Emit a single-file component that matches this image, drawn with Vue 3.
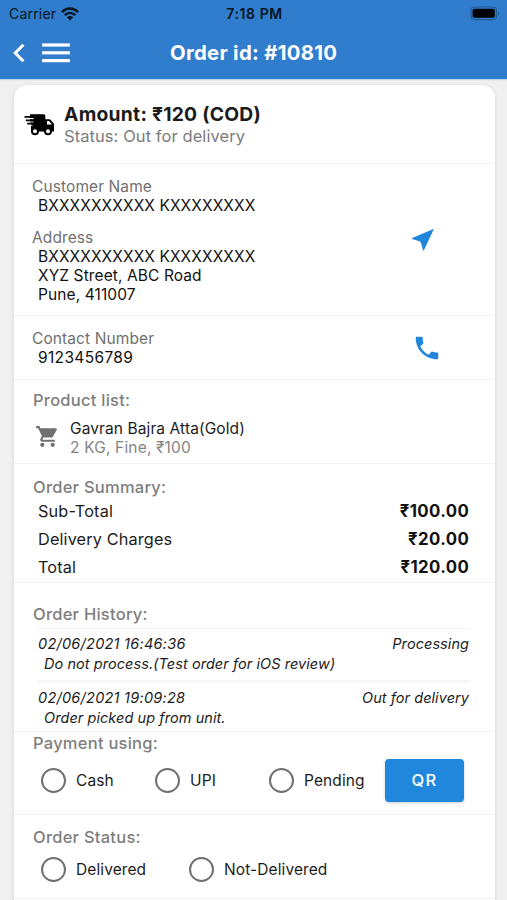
<script setup>
const summary = [
  { label: 'Sub-Total', value: '₹100.00' },
  { label: 'Delivery Charges', value: '₹20.00' },
  { label: 'Total', value: '₹120.00' },
]
const history = [
  { date: '02/06/2021 16:46:36', state: 'Processing', note: 'Do not process.(Test order for iOS review)' },
  { date: '02/06/2021 19:09:28', state: 'Out for delivery', note: 'Order picked up from unit.' },
]
</script>

<template>
  <div class="screen">
    <header class="header">
      <div class="statusbar">
        <div class="carrier">
          <span>Carrier</span>
          <svg width="18" height="14" viewBox="0 0 18 14" fill="none" stroke="#081422" stroke-width="2.5">
            <path d="M0.9 5.1C5.6 .4 12.4 .4 17.1 5.1" />
            <path d="M3.7 8.2C6.8 5.2 11.2 5.2 14.3 8.2" />
            <path d="M9 13.4L5.9 10.2C7.7 8.6 10.3 8.6 12.1 10.2Z" fill="#081422" stroke="none" />
          </svg>
        </div>
        <span class="time">7:18 PM</span>
        <svg class="battery" width="30" height="15" viewBox="0 0 30 15">
          <rect x="1" y="1" width="25.5" height="12.6" rx="3.5" fill="none" stroke="#225b96" stroke-width="1.2" />
          <rect x="2.6" y="2.8" width="22.2" height="9" rx="1.8" fill="#000" />
          <path d="M28 5.2Q30 7.3 28 9.4Z" fill="#225b96" />
        </svg>
      </div>
      <div class="navbar">
        <svg class="back" width="14" height="20" viewBox="0 0 14 20" fill="none" stroke="#fff" stroke-width="3">
          <path d="M12.4 1.8L4.2 10L12.4 18.2" />
        </svg>
        <svg class="menu" width="28" height="20" viewBox="0 0 28 20" fill="#fff">
          <rect y="0.4" width="28" height="3.2" /><rect y="8.2" width="28" height="3.2" /><rect y="16" width="28" height="3.2" />
        </svg>
        <h1>Order id: #10810</h1>
      </div>
    </header>

    <main class="card">
      <section class="amount">
        <svg class="truck" width="32" height="24" viewBox="0 0 32 24">
          <path d="M6 2.2H19.8Q21.3 2.2 21.3 3.7V7.2H25.2Q26.1 7.2 26.8 7.9L29.4 11Q30 11.7 30 12.5V19.6H7V11L6 10Z" fill="#000" />
          <path d="M1.5 6.6H9.5M2 10H9.5M3 13.3H8.5" stroke="#fff" stroke-width="1.1" />
          <path d="M0.5 4.9H8M1.8 8.3H9M3.2 11.7H9" stroke="#000" stroke-width="1.7" />
          <path d="M23 8.9H25L28 12.4H23Z" fill="#fff" />
          <circle cx="11" cy="19.3" r="3" fill="#fff" stroke="#000" stroke-width="2" />
          <circle cx="24" cy="19.3" r="3" fill="#fff" stroke="#000" stroke-width="2" />
        </svg>
        <div>
          <h2>Amount: ₹120 (COD)</h2>
          <p class="state">Status: Out for delivery</p>
        </div>
      </section>

      <section class="customer">
        <div>
          <p class="label">Customer Name</p>
          <p class="value">BXXXXXXXXXX KXXXXXXXX</p>
          <p class="label address-label">Address</p>
          <p class="value">BXXXXXXXXXX KXXXXXXXX</p>
          <p class="value">XYZ Street, ABC Road</p>
          <p class="value">Pune, 411007</p>
        </div>
        <svg class="nav-icon" width="24" height="24" viewBox="0 0 24 24"><path d="M23 .8L12.8 22.6Q12.1 22.8 12 22L9.9 14.8Q9.5 13.7 8.4 13.3L1.2 11.1Q.7 10.5 1.2 10Z" fill="#2185dc" /></svg>
      </section>

      <section class="contact">
        <div>
          <p class="label">Contact Number</p>
          <p class="value digits">9123456789</p>
        </div>
        <svg class="phone" width="30" height="30" viewBox="0 0 24 24"><path fill="#2185dc" d="M6.62 10.79c1.44 2.83 3.76 5.14 6.59 6.59l2.2-2.2c.27-.27.67-.36 1.02-.24 1.12.37 2.33.57 3.57.57.55 0 1 .45 1 1V20c0 .55-.45 1-1 1-9.39 0-17-7.61-17-17 0-.55.45-1 1-1h3.5c.55 0 1 .45 1 1 0 1.25.2 2.45.57 3.57.11.35.03.74-.25 1.02l-2.2 2.2z" /></svg>
      </section>

      <section class="products">
        <h3>Product list:</h3>
        <div class="product">
          <svg width="25" height="25" viewBox="0 0 24 24"><path fill="#707070" d="M7 18c-1.1 0-1.99.9-1.99 2S5.9 22 7 22s2-.9 2-2-.9-2-2-2zM1 2v2h2l3.6 7.59-1.35 2.45c-.16.28-.25.61-.25.96 0 1.1.9 2 2 2h12v-2H7.42c-.14 0-.25-.11-.25-.25l.03-.12.9-1.63h7.45c.75 0 1.41-.41 1.75-1.03l3.58-6.49c.08-.14.12-.31.12-.48 0-.55-.45-1-1-1H5.21l-.94-2H1zm16 16c-1.1 0-1.99.9-1.99 2s.89 2 1.99 2 2-.9 2-2-.9-2-2-2z" /></svg>
          <div>
            <p class="product-name">Gavran Bajra Atta(Gold)</p>
            <p class="product-info">2 KG, Fine, ₹100</p>
          </div>
        </div>
      </section>

      <section class="summary">
        <h3>Order Summary:</h3>
        <div v-for="row in summary" :key="row.label" class="sum-row">
          <span>{{ row.label }}</span><b>{{ row.value }}</b>
        </div>
      </section>

      <section class="history">
        <h3>Order History:</h3>
        <div v-for="h in history" :key="h.date" class="entry">
          <div class="entry-head"><span class="date">{{ h.date }}</span><span>{{ h.state }}</span></div>
          <p>{{ h.note }}</p>
        </div>
      </section>

      <section class="payment">
        <h3>Payment using:</h3>
        <div class="options">
          <label class="cash"><i></i>Cash</label>
          <label class="upi"><i></i>UPI</label>
          <label class="pending"><i></i>Pending</label>
          <button>QR</button>
        </div>
      </section>

      <section class="order-status">
        <h3>Order Status:</h3>
        <div class="options">
          <label class="delivered"><i></i>Delivered</label>
          <label><i></i>Not-Delivered</label>
        </div>
      </section>
    </main>
  </div>
</template>

<style>
body { margin: 0; }
</style>

<style scoped>
* { box-sizing: border-box; }
.screen {
  width: 507px; height: 900px; overflow: hidden; background: #f0f0f0;
  font-family: Inter, "Liberation Sans", sans-serif; font-size: 15.5px; line-height: 19px; color: #1c1c1c;
  letter-spacing: 0.1px;
}
h1, h2, h3, p { margin: 0; white-space: nowrap; }
.header { height: 79px; background: #307dcd; box-shadow: 0 1px 1px #b9d6f2; }
.statusbar {
  display: grid; grid-template-columns: 1fr auto 1fr; align-items: center;
  height: 27px; padding: 0 7px 0 9px; color: #081422; font-size: 14px;
}
.carrier { display: flex; align-items: center; gap: 5px; letter-spacing: 0.2px; }
.time { font-weight: 600; font-size: 14px; letter-spacing: 0.6px; }
.battery { justify-self: end; }
.navbar { display: flex; align-items: center; height: 51px; padding-left: 11px; color: #fff; }
.menu { margin-left: 17px; }
h1 { margin-left: 100px; font-size: 20.3px; font-weight: 700; letter-spacing: 0.3px; }
.card {
  width: 481px; height: 840px; margin: 6px 0 0 14px; background: #fff;
  border-radius: 13px; box-shadow: 0 1px 4px rgba(0, 0, 0, .12);
}
section { border-bottom: 1px solid #f2f2f2; }
.amount { display: flex; height: 79px; padding: 18px 0 0 10px; }
.truck { margin: 9px 8px 0 0; }
h2 { font-size: 19.3px; line-height: 23px; font-weight: 700; letter-spacing: 0.25px; }
.state { font-size: 16.5px; line-height: 21px; color: #7c7c7c; letter-spacing: 0.07px; }
.customer { height: 152px; padding: 13px 0 0 18px; display: flex; }
.customer > div, .contact > div { width: 379px; }
.label { color: #707070; }
.value { padding-left: 6px; color: #111; }
.digits { letter-spacing: 0.35px; }
.address-label { margin-top: 13px; }
.nav-icon { margin-top: 51px; }
.contact { height: 64px; padding: 13px 0 0 18px; display: flex; }
.phone { margin: 4px 0 0 1px; }
h3 { font-size: 16.5px; line-height: 20px; font-weight: 500; color: #7e7e7e; letter-spacing: .25px; }
.products { height: 84px; padding: 10px 0 0 19px; }
.product { display: flex; padding: 9px 0 0 2px; }
.product svg { margin: 5px 10px 0 0; }
.product-name { letter-spacing: 0.1px; }
.product-info { color: #858585; letter-spacing: 0.17px; }
.summary { height: 119px; padding: 13px 26px 0 19px; }
.sum-row { display: flex; justify-content: space-between; height: 28px; padding-left: 5px; font-size: 16.3px; line-height: 28px; letter-spacing: 0.13px; }
.sum-row b { font-weight: 700; font-size: 16.8px; color: #111; letter-spacing: 0.4px; margin-right: -0.2px; }
.history { height: 149px; padding: 21px 26px 0 19px; }
.entry { margin-left: 5px; border-top: 1px solid #f2f2f2; padding-top: 5px; height: 52px; font-style: italic; font-size: 14.5px; line-height: 20px; letter-spacing: 0.06px; }
.history h3 { margin-bottom: 4px; }
.entry + .entry { border-top: 3px solid #f7f7f7; padding-top: 5px; }
.date { letter-spacing: 0.25px; }
.entry-head { display: flex; justify-content: space-between; }
.entry p { padding-left: 6px; }
.payment { height: 83px; padding: 1px 0 0 19px; }
.options { display: flex; align-items: center; padding-left: 8px; }
.payment .options { height: 43px; margin-top: 6px; }
label { display: flex; align-items: center; gap: 10px; white-space: nowrap; }
label i { width: 25px; height: 25px; border: 2.4px solid #707070; border-radius: 50%; }
.cash { width: 114px; }
.upi { width: 114px; }
.pending { width: 116px; }
button {
  width: 79px; height: 43px; padding: 0; border: 0; border-radius: 4px; background: #2087dc;
  color: #fff; font: 500 16.5px/43px Inter, sans-serif; letter-spacing: 1.3px; box-shadow: 0 1px 3px rgba(0, 0, 0, .2);
}
.order-status { height: 84px; padding: 12px 0 0 19px; }
.order-status .options { height: 25px; margin-top: 10px; }
.delivered { width: 148px; }
</style>
